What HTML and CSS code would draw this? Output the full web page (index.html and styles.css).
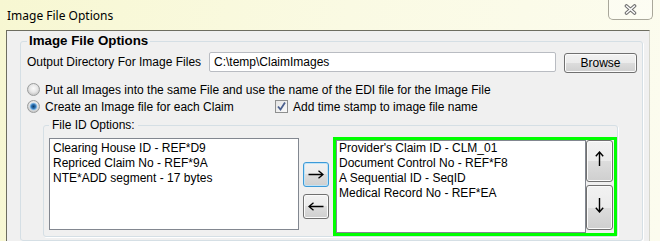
FILE: index.html
```html
<!DOCTYPE html>
<html lang="en">
<head>
    <meta charset="UTF-8">
    <title>Image File Options</title>
    <link rel="stylesheet" href="styles.css">
</head>
<body>

    <div class="window">

        <!-- Title bar -->
        <div class="titlebar">
            <span class="title">Image File Options</span>
            <button class="close-btn">
                <svg width="13" height="11" viewBox="0 0 13 11">
                    <path d="M2.5 2 L10.5 9 M10.5 2 L2.5 9" stroke="#6e6e6e" stroke-width="3.6" stroke-linecap="round"/>
                    <path d="M2.5 2 L10.5 9 M10.5 2 L2.5 9" stroke="#fdfdfd" stroke-width="1.6" stroke-linecap="round"/>
                </svg>
            </button>
        </div>

        <div class="client">
            <fieldset class="group">
                <legend class="group-title">Image File Options</legend>

                <div class="dir-row">
                    <label class="dir-label" for="outDir">Output Directory For Image Files</label>
                    <input type="text" id="outDir" class="textbox" value="C:\temp\ClaimImages">
                    <button class="button browse">Browse</button>
                </div>

                <div class="option-row first">
                    <span class="radio"></span>
                    <span>Put all Images into the same File and use the name of the EDI file for the Image File</span>
                </div>
                <div class="option-row">
                    <div class="option-main">
                        <span class="radio checked"></span>
                        <span>Create an Image file for each Claim</span>
                    </div>
                    <span class="checkbox">
                        <svg width="11" height="11" viewBox="0 0 11 11">
                            <path d="M2 5.5 L4.5 8.5 L9 1.5" fill="none" stroke="#4a5f8e" stroke-width="1.8"/>
                        </svg>
                    </span>
                    <span>Add time stamp to image file name</span>
                </div>

                <!-- File ID options -->
                <fieldset class="subgroup">
                    <legend class="subgroup-title">File ID Options:</legend>
                    <div class="id-row">
                        <ul class="listbox available">
                            <li>Clearing House ID - REF*D9</li>
                            <li>Repriced Claim No - REF*9A</li>
                            <li>NTE*ADD segment - 17 bytes</li>
                        </ul>

                        <div class="move-buttons">
                            <button class="button arrow default" title="Add">
                                <svg width="16" height="9" viewBox="0 0 16 9">
                                    <path d="M0.5 4.5 H15 M10.5 0.8 L15 4.5 L10.5 8.2" fill="none" stroke="#000" stroke-width="1.3"/>
                                </svg>
                            </button>
                            <button class="button arrow" title="Remove">
                                <svg width="16" height="9" viewBox="0 0 16 9">
                                    <path d="M15.5 4.5 H1 M5.5 0.8 L1 4.5 L5.5 8.2" fill="none" stroke="#000" stroke-width="1.3"/>
                                </svg>
                            </button>
                        </div>

                        <div class="selected-box">
                            <ul class="listbox selected">
                                <li>Provider's Claim ID - CLM_01</li>
                                <li>Document Control No - REF*F8</li>
                                <li>A Sequential ID - SeqID</li>
                                <li>Medical Record No - REF*EA</li>
                            </ul>
                            <div class="order-buttons">
                                <button class="button arrow up" title="Move up">
                                    <svg width="9" height="15" viewBox="0 0 9 15">
                                        <path d="M4.5 15 V1 M0.8 5.2 L4.5 1 L8.2 5.2" fill="none" stroke="#000" stroke-width="1.4"/>
                                    </svg>
                                </button>
                                <button class="button arrow down" title="Move down">
                                    <svg width="9" height="15" viewBox="0 0 9 15">
                                        <path d="M4.5 0 V14 M0.8 9.8 L4.5 14 L8.2 9.8" fill="none" stroke="#000" stroke-width="1.4"/>
                                    </svg>
                                </button>
                            </div>
                        </div>
                    </div>
                </fieldset>
            </fieldset>
        </div>
    </div>

</body>
</html>
```

FILE: styles.css
```css
body {
    margin: 0;
    width: 660px;
    height: 241px;
    overflow: hidden;
    font-family: "Liberation Sans", Arial, sans-serif;
    font-size: 12px;
    color: #000;
}

/* Window frame (Aero style) */
.window {
    height: 241px;
    box-sizing: border-box;
    padding: 0 10px 0 6px;
    background: linear-gradient(100deg, #f7f7d2 0%, #fafae3 50%, #fcfcef 100%);
}

.titlebar {
    display: flex;
    justify-content: space-between;
    align-items: flex-start;
    height: 30px;
    margin-right: -3px;
}

.title {
    font-family: "Noto Sans", "Open Sans", sans-serif;
    font-size: 12px;
    line-height: 17px;
    padding: 7px 0 0 1px;
}

.close-btn {
    width: 45px;
    height: 20px;
    padding: 0;
    border: 1px solid #a9a79a;
    border-top: none;
    border-radius: 0 0 5px 5px;
    background: rgba(255, 255, 255, 0.35);
    display: flex;
    align-items: center;
    justify-content: center;
}

/* Client area */
.client {
    height: 207px;
    background: #f0f0f0;
    border-top: 1px solid #6d6d60;
    border-left: 1px solid #6d6d60;
    border-right: 1px solid #d6d6cc;
    padding: 3px 0 0 13px;
    overflow: hidden;
}

.group {
    margin: 0;
    width: 623px;
    box-sizing: border-box;
    border: 1px solid #d5dfe5;
    border-radius: 3px;
    padding: 0 0 3px 6px;
    box-shadow: 1px 1px 0 #fff;
}

.group-title {
    font-weight: bold;
    font-size: 13.33px;
    line-height: 14px;
    padding: 0 2px;
}

.dir-row {
    display: flex;
    align-items: flex-start;
    margin-top: 4px;
}

.dir-label {
    width: 182px;
    line-height: 20px;
}

.textbox {
    width: 347px;
    height: 20px;
    box-sizing: border-box;
    margin: 0;
    padding: 0 4px;
    border: 1px solid #b9bcc2;
    border-radius: 2px;
    background: #fff;
    font: inherit;
    color: #000;
}

/* Vista style push button */
.button {
    font: inherit;
    color: #000;
    padding: 0;
    border: 1px solid #707070;
    border-radius: 3px;
    background: linear-gradient(#f2f2f2, #ebebeb 50%, #dddddd 50%, #cfcfcf);
    box-shadow: inset 0 0 0 1px #fbfbfb;
}

.browse {
    width: 73px;
    height: 20px;
    margin: 1px 0 0 8px;
}

.option-row {
    display: flex;
    align-items: center;
    height: 17px;
}

.option-row.first {
    margin-top: 8px;
}

.option-main {
    display: flex;
    align-items: center;
    width: 248px;
}

.radio {
    width: 13px;
    height: 13px;
    box-sizing: border-box;
    border-radius: 50%;
    border: 1px solid #9a9c9c;
    background: radial-gradient(circle at 50% 40%, #fbfbfb 0, #e6e6e6 4px, #cdcdcd 6px);
    margin-right: 5px;
    flex-shrink: 0;
}

.radio.checked {
    background: radial-gradient(circle, #0f3f6a 0, #2b6fb0 2px, #8cc0e8 3.4px, rgba(255, 255, 255, 0) 4.2px),
                radial-gradient(circle at 50% 40%, #fbfbfb 0, #e6e6e6 4px, #cdcdcd 6px);
}

.checkbox {
    width: 13px;
    height: 13px;
    box-sizing: border-box;
    border: 1px solid #8e8f8f;
    background: linear-gradient(135deg, #e4e4e4, #fafafa);
    margin-right: 5px;
    display: flex;
    align-items: center;
    justify-content: center;
}

/* File ID options */
.subgroup {
    margin: 3px 0 0 16px;
    width: 575px;
    box-sizing: border-box;
    border: 1px solid #d5dfe5;
    border-radius: 3px;
    padding: 6px 0 0 5px;
    box-shadow: 1px 1px 0 #fff;
}

.subgroup-title {
    font-size: 12px;
    line-height: 14px;
    padding: 0 3px;
}

.id-row {
    display: flex;
    align-items: flex-start;
}

.listbox {
    list-style: none;
    margin: 0;
    box-sizing: border-box;
    background: #fff;
    border: 1px solid #828790;
    line-height: 15px;
    white-space: nowrap;
}

.available {
    width: 250px;
    height: 92px;
    padding: 2px 3px;
}

.move-buttons {
    display: flex;
    flex-direction: column;
    gap: 7px;
    width: 26px;
    margin: 24px 0 0 4px;
}

.arrow {
    display: flex;
    align-items: center;
    justify-content: center;
}

.move-buttons .arrow {
    height: 25px;
}

.arrow.default {
    border-color: #3c9ad8;
    box-shadow: inset 0 0 0 1px #bfe3f7;
}

.selected-box {
    flex: 1;
    height: 99px;
    box-sizing: border-box;
    margin: -1px 0 0 4px;
    border: 3px solid #00ff00;
    display: flex;
}

.selected {
    flex: 1;
    height: 100%;
    padding: 0 2px;
}

.order-buttons {
    width: 27px;
    display: flex;
    flex-direction: column;
    gap: 3px;
    padding-right: 1px;
}

.order-buttons .arrow {
    padding-bottom: 5px;
}

.order-buttons .up {
    height: 42px;
}

.order-buttons .down {
    height: 45px;
}
```
